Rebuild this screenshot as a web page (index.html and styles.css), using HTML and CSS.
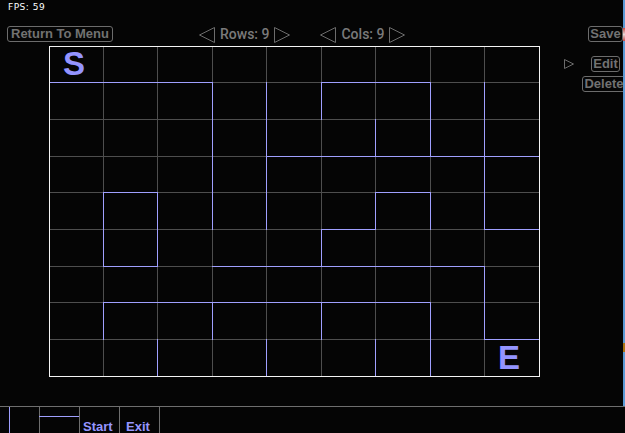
FILE: index.html
```html
<!DOCTYPE html>
<html lang="en">
<head>
<meta charset="utf-8">
<title>Maze Editor</title>
<link rel="stylesheet" href="styles.css">
</head>
<body>
<div class="screen">
  <div class="upper">
    <div class="stage">
      <div class="fps">FPS: 59</div>
      <div class="toolbar">
        <button class="btn btn-menu">Return To Menu</button>
        <div class="steppers">
          <div class="stepper">
            <svg class="tri" width="16" height="16" viewBox="0 0 16 16"><polygon points="15.5,0.5 0.5,8 15.5,15.5"/></svg>
            <span class="stepper-label">Rows: 9</span>
            <svg class="tri" width="16" height="16" viewBox="0 0 16 16"><polygon points="0.5,0.5 15.5,8 0.5,15.5"/></svg>
          </div>
          <div class="stepper">
            <svg class="tri" width="16" height="16" viewBox="0 0 16 16"><polygon points="15.5,0.5 0.5,8 15.5,15.5"/></svg>
            <span class="stepper-label">Cols: 9</span>
            <svg class="tri" width="16" height="16" viewBox="0 0 16 16"><polygon points="0.5,0.5 15.5,8 0.5,15.5"/></svg>
          </div>
        </div>
        <button class="btn btn-save">Save</button>
      </div>
      <div class="workspace">
        <svg class="maze" width="491" height="331" viewBox="0 0 491 331">
          <path class="grid-line" d="M54.5 0V331M108.5 0V331M163.5 0V331M217.5 0V331M272.5 0V331M326.5 0V331M381.5 0V331M435.5 0V331M0 36.5H491M0 73.5H491M0 110.5H491M0 146.5H491M0 183.5H491M0 220.5H491M0 256.5H491M0 293.5H491"/>
          <path class="wall" d="M0 36.5H164M272 36.5H382M217 110.5H491M54 146.5H109M326 146.5H382M272 183.5H327M435 183.5H491M54 220.5H109M163 220.5H436M54 256.5H382M435 293.5H491
            M54.5 146V221M54.5 256V294M108.5 146V221M108.5 293V331M163.5 36V184M163.5 256V294M217.5 36V184M217.5 293V331M272.5 36V74M272.5 183V221M272.5 256V294M326.5 73V111M326.5 146V184M326.5 293V331M381.5 36V111M381.5 146V184M381.5 256V331M435.5 36V184M435.5 220V294"/>
          <rect class="border" x="0.5" y="0.5" width="490" height="330"/>
          <text class="mark" x="25" y="29">S</text>
          <text class="mark" x="460" y="322.5">E</text>
        </svg>
        <div class="side">
          <div class="side-row">
            <svg class="play" width="10" height="10" viewBox="0 0 10 10"><polygon points="0.5,0.5 9.5,5 0.5,9.5"/></svg>
            <button class="btn btn-edit">Edit</button>
          </div>
          <button class="btn btn-delete">Delete</button>
        </div>
      </div>
    </div>
    <div class="edge">
      <span class="edge-red"></span>
      <span class="edge-orange"></span>
    </div>
  </div>
  <div class="bottombar">
    <div class="cell cell-blue"></div>
    <div class="cell"><div class="cell-line"></div></div>
    <div class="cell cell-text cell-start">Start</div>
    <div class="cell cell-text cell-exit">Exit</div>
    <div class="cell"></div>
  </div>
</div>
</body>
</html>
```

FILE: styles.css
```css
* { box-sizing: border-box; }

html, body {
  margin: 0;
  padding: 0;
  background: #050505;
}

body {
  width: 625px;
  height: 433px;
  overflow: hidden;
  font-family: "Liberation Sans", Arial, sans-serif;
}

.screen {
  display: flex;
  flex-direction: column;
  width: 625px;
  height: 433px;
}

.upper {
  display: flex;
  height: 406px;
}

.stage {
  width: 623px;
  height: 406px;
  overflow: hidden;
  flex: none;
}

.edge {
  width: 2px;
  height: 406px;
  background: #5b9bd5;
  display: flex;
  flex-direction: column;
  flex: none;
}

.edge-red {
  display: block;
  margin-top: 28px;
  height: 13px;
  background: linear-gradient(#c84848, #e8d8d8 50%, #c84848);
}

.edge-orange {
  display: block;
  margin-top: 302px;
  height: 9px;
  background: #a87414;
}

.fps {
  padding: 3px 0 0 8px;
  height: 12px;
  font-family: "DejaVu Sans", sans-serif;
  font-size: 9px;
  line-height: 9px;
  letter-spacing: 0.5px;
  color: #ffffff;
}

.toolbar {
  display: flex;
  align-items: flex-start;
  margin-top: 14px;
  height: 16px;
  padding-left: 7px;
}

.btn {
  display: block;
  flex: none;
  height: 16px;
  margin: 0;
  padding: 0;
  border: 1px solid #6c6c6c;
  border-radius: 3px;
  background: transparent;
  color: #727272;
  font-family: "Liberation Sans", Arial, sans-serif;
  font-weight: bold;
  font-size: 13px;
  line-height: 14px;
  text-align: center;
  white-space: nowrap;
}

.btn-menu { width: 106px; }

.steppers {
  display: flex;
  gap: 30px;
  margin-left: 86px;
}

.stepper {
  display: flex;
  align-items: flex-start;
  gap: 5px;
}

.tri {
  display: block;
  margin-top: 1px;
  fill: none;
  stroke: #6c6c6c;
  stroke-width: 1;
}

.stepper-label {
  font-family: Roboto, "Liberation Sans", sans-serif;
  font-weight: 500;
  font-size: 14px;
  line-height: 16px;
  color: #7a7a7a;
  white-space: nowrap;
}

.btn-save {
  margin-left: auto;
  width: 35px;
}

.workspace {
  display: flex;
  align-items: flex-start;
  margin-top: 4px;
}

.maze {
  display: block;
  flex: none;
  margin-left: 49px;
}

.grid-line {
  fill: none;
  stroke: #4e4e4e;
  stroke-width: 1;
}

.wall {
  fill: none;
  stroke: #a0a0ff;
  stroke-width: 1;
}

.border {
  fill: none;
  stroke: #f4f4f4;
  stroke-width: 1;
}

.mark {
  fill: #9494ff;
  font-family: "Liberation Sans", Arial, sans-serif;
  font-weight: bold;
  font-size: 33px;
  text-anchor: middle;
}

.side {
  flex: none;
  width: 83px;
  padding-top: 10px;
  display: flex;
  flex-direction: column;
  align-items: flex-start;
}

.side-row {
  display: flex;
  align-items: center;
  margin-left: 24px;
}

.play {
  display: block;
  fill: none;
  stroke: #6c6c6c;
  stroke-width: 1;
}

.btn-edit {
  width: 29px;
  margin-left: 17px;
}

.btn-delete {
  width: 44px;
  margin-top: 4px;
  margin-left: 42px;
}

.bottombar {
  display: flex;
  height: 27px;
  border-top: 1px solid #6e6e6e;
  padding-left: 9px;
}

.cell {
  flex: none;
  width: 40px;
  height: 100%;
  border-left: 1px solid #6e6e6e;
}

.cell-blue {
  width: 30px;
  border-left-color: #a0a0ff;
}

.cell-line {
  height: 1px;
  margin-top: 9px;
  margin-left: -1px;
  margin-right: -1px;
  background: #a0a0ff;
}

.cell-text {
  padding-top: 13px;
  font-family: "Liberation Sans", Arial, sans-serif;
  font-weight: bold;
  font-size: 13px;
  line-height: 13px;
  color: #9696ff;
  white-space: nowrap;
}

.cell-start { padding-left: 3px; }
.cell-exit { padding-left: 6px; }
```
